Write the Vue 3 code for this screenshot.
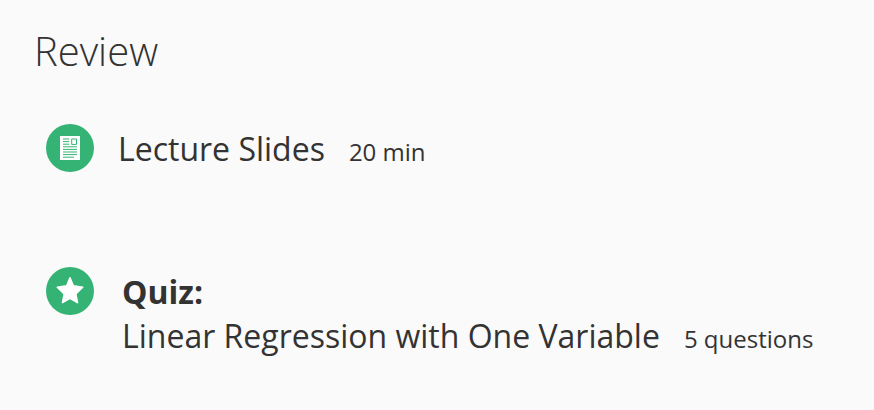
<script setup>
const items = [
  { kind: 'reading', label: '', title: 'Lecture Slides', meta: '20 min' },
  { kind: 'quiz', label: 'Quiz:', title: 'Linear Regression with One Variable', meta: '5 questions' },
]
</script>

<template>
  <main class="module">
    <h2 class="heading">Review</h2>
    <ul class="items">
      <li v-for="item in items" :key="item.title" class="item" :class="item.kind">
        <svg v-if="item.kind === 'reading'" class="badge" viewBox="0 0 48 48" aria-hidden="true">
          <circle cx="24" cy="24" r="24" fill="#35b374" />
          <path d="M14 12H34V36H14Z" fill="#fff" />
          <path d="M17 15H23.3M17 17.6H23.3M17 20.2H23.3M17 22.8H31M17 25.4H31M17 28H31M17 30.6H31M17 33.2H28M25.7 15H30.5V20.4H25.7Z" fill="none" stroke="#35b374" />
        </svg>
        <svg v-else class="badge" viewBox="0 0 48 48" aria-hidden="true">
          <circle cx="24" cy="24" r="24" fill="#35b374" />
          <path d="M24 10.8L27.3 18.8L36.7 20.3L29.8 27L31.5 35.6L24 31.3L16.5 35.6L18.2 27L11.3 20.3L20.7 18.8Z" fill="#fff" stroke="#fff" stroke-width="1.6" stroke-linejoin="round" />
        </svg>
        <div class="text">
          <strong v-if="item.label" class="label">{{ item.label }}</strong>
          <div class="line">
            <span class="title">{{ item.title }}</span>
            <span class="meta">{{ item.meta }}</span>
          </div>
        </div>
      </li>
    </ul>
  </main>
</template>

<style>
body {
  background: #fafafa;
}
</style>

<style scoped>
.module {
  padding: 24px 34px;
  color: #333;
  font-family: "Open Sans", sans-serif;
}
.heading {
  margin: 0;
  font-size: 40px;
  font-weight: 300;
  line-height: 54px;
}
.items {
  display: flex;
  flex-direction: column;
  gap: 95px;
  margin: 46px 0 0;
  padding: 0 0 0 12px;
  list-style: none;
}
.item {
  display: flex;
  align-items: flex-start;
  gap: 24px;
}
.quiz {
  gap: 28px;
}
.badge {
  flex: none;
  width: 48px;
  height: 48px;
}
.label {
  display: block;
}
.text {
  font-size: 32px;
  line-height: 44px;
  padding-top: 3px;
}
.line {
  display: flex;
  align-items: baseline;
  gap: 24px;
}
.meta {
  font-size: 24px;
  line-height: 32px;
}
</style>
